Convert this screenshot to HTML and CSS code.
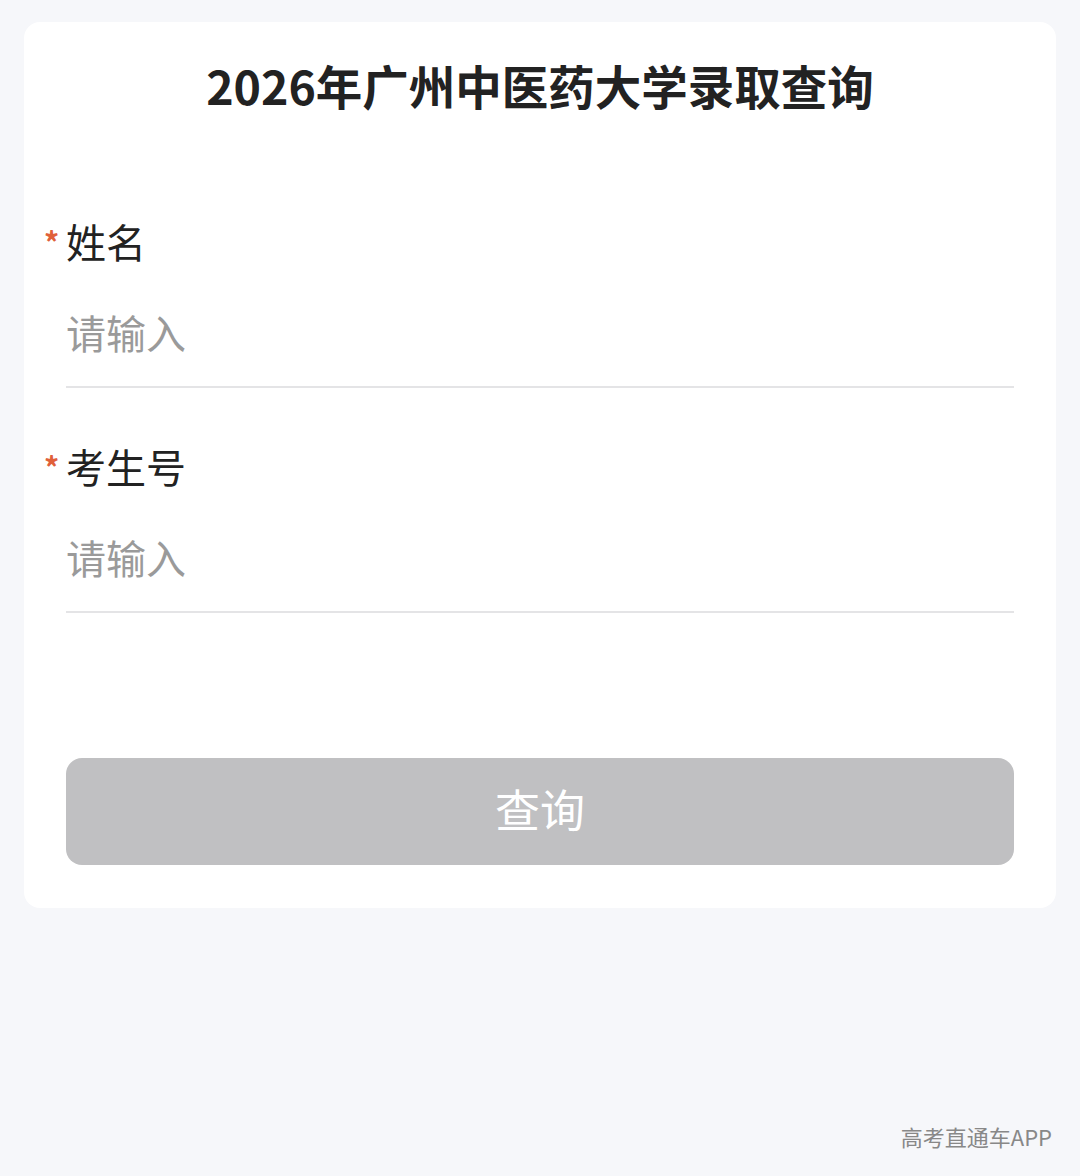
FILE: index.html
```html
<!DOCTYPE html>
<html lang="zh-CN">

<head>
    <meta charset="UTF-8">
    <meta name="viewport" content="width=device-width, initial-scale=1.0">
    <title>录取查询</title>
    <link rel="stylesheet" href="styles.css">
</head>

<body>
    <div class="page">
        <div class="card">
            <h1 class="title">2026年广州中医药大学录取查询</h1>

            <div class="field">
                <label class="label"><span class="star">*</span>姓名</label>
                <input class="input" type="text" placeholder="请输入">
            </div>

            <div class="field">
                <label class="label"><span class="star">*</span>考生号</label>
                <input class="input" type="text" placeholder="请输入">
            </div>

            <button class="btn" disabled>查询</button>
        </div>

        <div class="footer">高考直通车APP</div>
    </div>
</body>

</html>
```

FILE: styles.css
```css
* {
    margin: 0;
    padding: 0;
    box-sizing: border-box;
}

body {
    background-color: #f6f7fa;
    font-family: "Noto Sans CJK SC", "Noto Sans", sans-serif;
    color: #222;
}

.page {
    min-height: 1176px;
    display: flex;
    flex-direction: column;
}

.card {
    margin: 22px 24px 0;
    padding: 33px 42px 43px;
    background-color: #fff;
    border-radius: 16px;
}

.title {
    font-size: 46.5px;
    line-height: 60px;
    font-weight: 700;
    text-align: center;
    color: #222;
}

.field {
    margin-top: 50px;
}

.field:first-of-type {
    margin-top: 98px;
}

.label {
    display: flex;
    align-items: center;
    height: 56px;
    margin-left: -22px;
    font-size: 40px;
    line-height: 56px;
    color: #222;
}

.star {
    width: 22px;
    font-size: 30px;
    line-height: 1;
    font-weight: 700;
    color: #e0603a;
}

.input {
    display: block;
    width: 100%;
    height: 119px;
    padding: 38px 0 29px;
    border: none;
    border-bottom: 2px solid #e4e4e6;
    outline: none;
    background: transparent;
    font-family: inherit;
    font-size: 40px;
    line-height: 50px;
    color: #222;
}

.input::placeholder {
    color: #9a9a9a;
}

.btn {
    display: block;
    width: 100%;
    height: 107px;
    margin-top: 145px;
    padding-bottom: 6px;
    border: none;
    border-radius: 16px;
    background-color: #c0c0c2;
    color: #fff;
    font-family: inherit;
    font-size: 45px;
}

.footer {
    margin-top: auto;
    padding: 0 28px 25px 0;
    text-align: right;
    font-size: 22px;
    line-height: 30px;
    color: #888;
}
```
